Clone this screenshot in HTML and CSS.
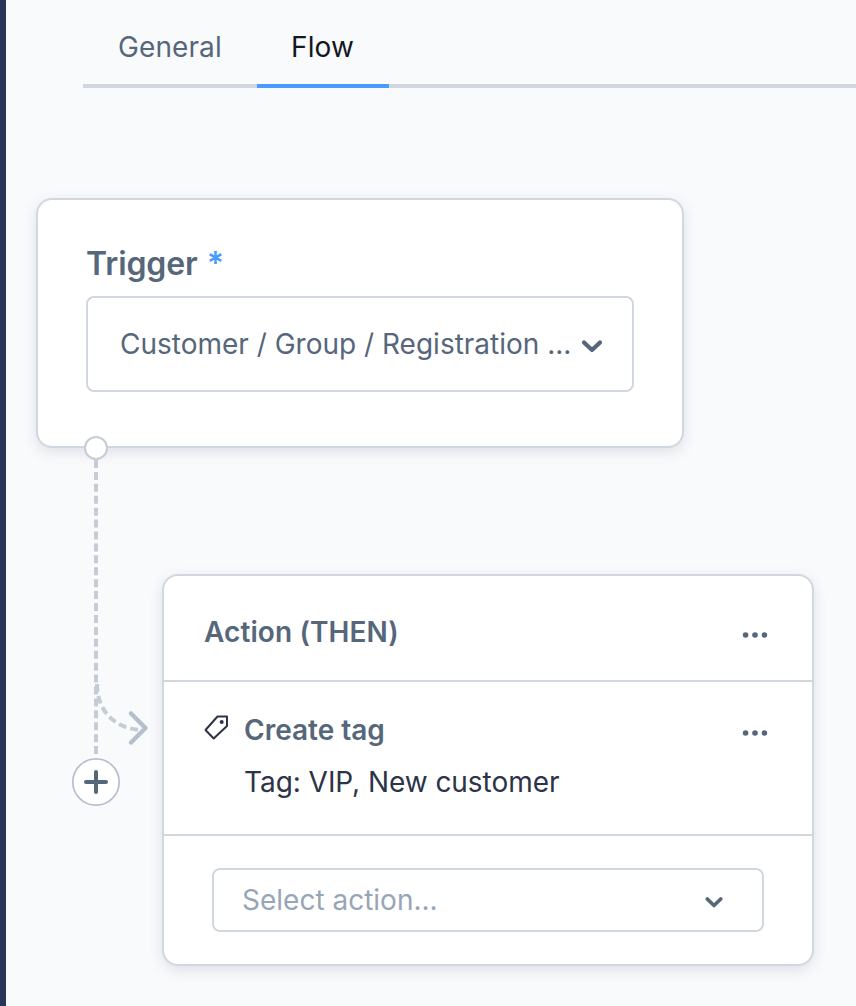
FILE: index.html
```html
<!DOCTYPE html>
<html lang="en">
<head>
<meta charset="utf-8">
<title>Flow</title>
<link rel="stylesheet" href="styles.css">
</head>
<body>
<div class="page">
  <aside class="sidebar"></aside>
  <main class="content">
    <nav class="tabs">
      <a class="tab">General</a>
      <a class="tab tab-active">Flow</a>
    </nav>
    <section class="canvas">
      <div class="card trigger-card">
        <div class="trigger-label"><span>Trigger</span><span class="required">*</span></div>
        <div class="select select-large">
          <span>Customer / Group / Registration ...</span>
          <svg class="chevron-large" width="22" height="14" viewBox="0 0 22 14"><path d="M3 3.500l8 7.500 8-7.500"/></svg>
        </div>
      </div>
      <svg class="connector" width="80" height="380" viewBox="0 0 80 380">
        <path class="dashed" d="M20 24V318" stroke-dasharray="8 3.92"/>
        <path class="dashed" d="M21 248C21 274 38 293 66 294" stroke-dasharray="8 4"/>
        <path class="arrow" d="M55 277.500L69.500 292L55 306.500"/>
        <circle class="node" cx="20" cy="12" r="11"/>
        <circle class="add-ring" cx="20" cy="346" r="23.200"/>
        <path class="add-plus" d="M10 346h20M20 336v20"/>
      </svg>
      <div class="card action-card">
        <header class="action-head">
          <span class="strong title">Action (THEN)</span>
          <svg class="dots" width="26" height="8" viewBox="0 0 26 8"><circle cx="3.600" cy="4" r="2.800"/><circle cx="13" cy="4" r="2.800"/><circle cx="22.400" cy="4" r="2.800"/></svg>
        </header>
        <div class="action-item">
          <svg class="tag-icon" width="26" height="26" viewBox="0 0 26 26"><path d="M13.500 2.500H23V12L9.700 24.500L1.500 16Z"/><circle cx="17.700" cy="8" r="2"/></svg>
          <div class="item-text">
            <span class="strong">Create tag</span>
            <span class="detail">Tag: VIP, New customer</span>
          </div>
          <svg class="dots" width="26" height="8" viewBox="0 0 26 8"><circle cx="3.600" cy="4" r="2.800"/><circle cx="13" cy="4" r="2.800"/><circle cx="22.400" cy="4" r="2.800"/></svg>
        </div>
        <footer class="action-foot">
          <div class="select select-small">
            <span>Select action...</span>
            <svg class="chevron-small" width="20" height="12" viewBox="0 0 20 12"><path d="M3.300 3l6.700 6.500 6.700-6.500"/></svg>
          </div>
        </footer>
      </div>
    </section>
  </main>
</div>
</body>
</html>
```
FILE: styles.css
```css
* { box-sizing: border-box; }
body {
  margin: 0;
  background: #f9fafc;
  color: #56667b;
  font-family: Inter, sans-serif;
  font-size: 28px;
  line-height: 36px;
}
.page { display: flex; height: 1006px; overflow: hidden; }
.sidebar { width: 6px; flex: none; background: #273556; }
.content { flex: 1; min-width: 0; }
.tabs {
  display: flex;
  height: 88px;
  margin-left: 77px;
  box-shadow: inset 0 -4px #d1d7df;
}
.tab { height: 88px; padding: 29px 35px 0; width: 174px; white-space: nowrap; letter-spacing: 0.1px; }
.tab-active { width: 132px; padding-left: 34px; color: #14161d; border-bottom: 4px solid #4a9bff; }
.canvas { position: relative; height: 918px; }
.card {
  position: absolute;
  background: #fff;
  border: 2px solid #d1d7df;
  border-radius: 16px;
  box-shadow: 0 4px 14px rgba(60, 70, 100, 0.14);
}
.trigger-card { left: 30px; top: 110px; width: 648px; height: 250px; padding: 42px 48px 0; }
.trigger-label { display: flex; gap: 9px; height: 54px; line-height: 44px; font-size: 32px; font-weight: 600; letter-spacing: -0.1px; }
.required { color: #4a9bff; }
.select {
  display: flex;
  align-items: center;
  justify-content: space-between;
  background: #fff;
  border: 2px solid #d1d7df;
  border-radius: 8px;
  white-space: nowrap;
}
.select-large { height: 96px; padding: 0 29px 0 32px; }
.select-small { width: 552px; height: 64px; padding: 0 38px 0 28px; color: #97a6b7; }
.chevron-large, .chevron-small { flex: none; fill: none; stroke: #56667b; stroke-linecap: round; stroke-linejoin: round; }
.chevron-large { stroke-width: 4.200; margin-top: 3px; }
.chevron-small { stroke-width: 3.700; margin-top: 3px; }
.connector { position: absolute; left: 70px; top: 348px; fill: none; overflow: visible; }
.dashed { stroke: #c4ccd6; stroke-width: 4; }
.arrow { stroke: #b5c0cd; stroke-width: 4.500; stroke-linecap: round; stroke-linejoin: round; }
.node { fill: #fff; stroke: #c4ccd6; stroke-width: 2; }
.add-ring { fill: #fff; stroke: #b5c0cd; stroke-width: 1.700; }
.add-plus { stroke: #56667b; stroke-width: 4; stroke-linecap: round; }
.action-card { left: 156px; top: 486px; width: 652px; height: 392px; }
.strong { font-weight: 600; }
.title { letter-spacing: 0.1px; }
.action-head {
  display: flex;
  align-items: center;
  justify-content: space-between;
  height: 106px;
  padding: 7px 44px 0 40px;
  border-bottom: 2px solid #d1d7df;
}
.dots { flex: none; fill: #56667b; margin-top: 6px; }
.action-item { display: flex; height: 154px; padding: 30px 44px 0 40px; border-bottom: 2px solid #d1d7df; }
.tag-icon { flex: none; margin-top: 2px; fill: none; stroke: #2b3448; stroke-width: 2; stroke-linejoin: round; }
.tag-icon circle { fill: #2b3448; stroke: none; }
.item-text { display: flex; flex: 1; flex-direction: column; gap: 16px; margin-left: 14px; }
.action-item .dots { margin-top: 17px; }
.detail { color: #2b3448; letter-spacing: -0.05px; }
.action-foot { padding: 32px 48px; }
```
